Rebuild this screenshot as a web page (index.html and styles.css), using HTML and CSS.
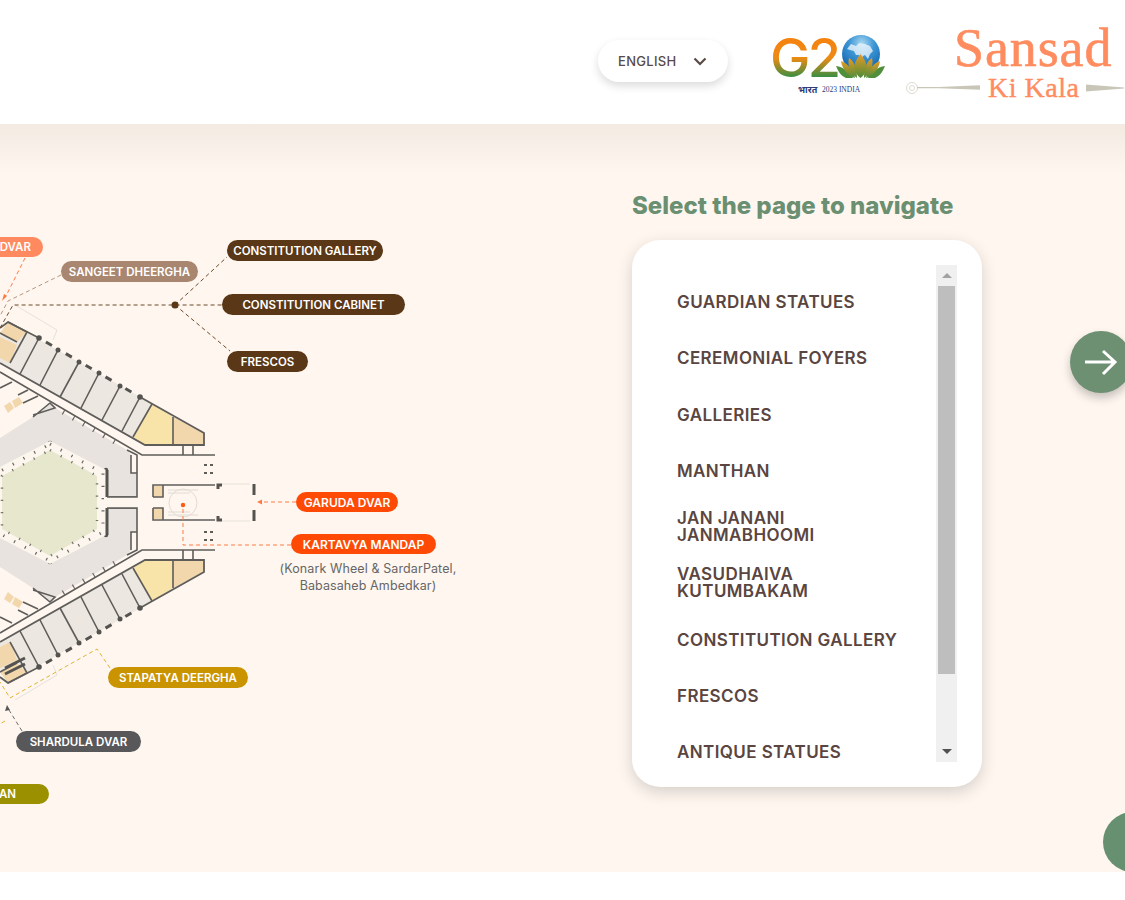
FILE: index.html
```html
<!DOCTYPE html>
<html lang="en">
<head>
<meta charset="utf-8">
<title>Sansad Ki Kala</title>
<link rel="stylesheet" href="styles.css">
</head>
<body>
<header class="topbar">
  <div class="lang">
    <span class="lang-label">ENGLISH</span>
    <svg class="lang-chevron" width="14" height="9" viewBox="0 0 14 9"><path d="M1.5 1.5 7 7l5.5-5.5" fill="none" stroke="#5a4a45" stroke-width="2.2"/></svg>
  </div>
  <svg class="g20" width="120" height="72" viewBox="766 28 120 72">
    <defs>
      <linearGradient id="tri" gradientUnits="userSpaceOnUse" x1="0" y1="38" x2="0" y2="78"><stop offset="0" stop-color="#f5820f"/><stop offset=".5" stop-color="#ee8a14"/><stop offset="1" stop-color="#2f8f45"/></linearGradient>
      <radialGradient id="sea" cx=".52" cy=".22" r=".8"><stop offset="0" stop-color="#a9d8f2"/><stop offset=".4" stop-color="#3f97d6"/><stop offset="1" stop-color="#0b5fa8"/></radialGradient>
      <linearGradient id="lotus" x1="0" y1="0" x2="0" y2="1"><stop offset="0" stop-color="#e99a25"/><stop offset="1" stop-color="#4c8c3a"/></linearGradient>
    </defs>
    <text class="g20-mark" x="770" y="77" fill="url(#tri)">G2</text>
    <circle cx="861" cy="54" r="19" fill="url(#sea)"/>
    <path d="M847 49l4-5 5 2 3-3 6 1 5 2 3 5-3 3-2 5-3-4-2 1-1 4-3-5-3 0-2-4-4-1z" fill="#e9f4fb" opacity=".8"/>
    <path d="M836 66c7 1 13 5 17 12h-7c-5-2-8-7-10-12zM885 66c-7 1-13 5-17 12h7c5-2 8-7 10-12z" fill="#4f8f3c"/>
    <path d="M841 61c6 2 12 8 14 17-7-2-13-9-14-17zM880 61c-6 2-12 8-14 17 7-2 13-9 14-17z" fill="url(#lotus)"/>
    <path d="M849 58c5 3 8 10 8 20-6-4-10-12-8-20zM872 58c-5 3-8 10-8 20 6-4 10-12 8-20z" fill="url(#lotus)"/>
    <path d="M860.500 54c4 5 7 10 6 15-1 4-3 7-6 9-3-2-5-5-6-9-1-5 2-10 6-15z" fill="url(#lotus)"/>
    <text class="g20-hi" x="798" y="93" fill="#2a3a78">भारत</text>
    <text class="g20-year" x="822" y="92" fill="#2a3a78">2023 INDIA</text>
  </svg>
  <div class="brand">
    <div class="brand-title">Sansad</div>
    <div class="brand-sub">
      <svg class="orn-left" width="76" height="16" viewBox="0 0 76 16"><circle cx="7" cy="8" r="5.500" fill="none" stroke="#dedbd0"/><circle cx="7" cy="8" r="2.500" fill="none" stroke="#dedbd0"/><path d="M12 7h22l41-1.800v4.600L34 8.200H12z" fill="#c9c6b8"/></svg>
      <span class="brand-kala">Ki Kala</span>
      <svg class="orn-right" width="38" height="10" viewBox="0 0 38 10"><path d="M0 1.500l38 3v1L0 8.500z" fill="#c9c6b8"/></svg>
    </div>
  </div>
</header>

<main class="stage">
  <section class="plan">
    <svg class="plan-svg" width="632" height="748" viewBox="0 124 632 748">
      <defs>
        <g id="half">
          <path class="f-gray" d="M0 438 33 417 50 403 55 408 127 450 131 455V473H137V497H107V503H0z"/>
          <path class="f-room" d="M8 322 204 433V445H145L0 363V336z"/>
          <path class="f-yellow" d="M152 404 173 417V445H145L133 437z"/>
          <path class="f-orange" d="M173 417 204 433V445H173z"/>
          <path class="f-orange" d="M8 322 27 332 17 342 0 333zM0 337 17 345 10 363 0 358z"/>
          <path class="f-orange" d="M4 406 10 402 14 408 8 413zM12 401 19 397 23 403 15 408z"/>
          <path class="f-orange" d="M153 486H163V497H153z"/>
          <path class="wall" d="M0 328 8 322 39 338M140 397 204 433V445H145L0 363"/>
          <path class="wall thin" d="M0 372 142 455H215M183 445V455M193 445V455M173 417V445M8 322 27 332 10 363M17 342 0 333"/>
          <path class="wall thin" d="M39 338 20 374M58 350 40 385M79 362 60 397M99 373 81 408M120 386 102 420M140 397 122 431M152 404 133 437"/>
          <path class="wall thin" d="M0 388 12 382M18 395 28 390M23 403 38 396M33 417 50 403 55 408 33 415M127 450 137 455V497H107M131 455V473H137"/>
          <path class="wall thin" d="M153 497V485H215M163 485V497H153"/>
          <path class="posts" d="M39 338 140 397"/>
          <circle class="post" cx="39" cy="338" r="2.800"/><circle class="post" cx="58" cy="350" r="2.500"/><circle class="post" cx="79" cy="362" r="2.500"/><circle class="post" cx="99" cy="373" r="2.500"/><circle class="post" cx="120" cy="386" r="2.500"/><circle class="post" cx="140" cy="397" r="2.800"/>
          <path class="ticks" d="M63 412 120 445"/>
          <path class="wall heavy" d="M93 472 97 476V481M45 452 50 449 55 452M6 472 2 476V481M218 489V485H222M254 484V495"/>
          <circle class="post" cx="50" cy="443" r="2.200"/>
          <circle class="post" cx="106" cy="470" r="2.200"/>
          <path class="wall dash-s" d="M204 465H213M204 473H213"/>
          <path class="faint" d="M15 305 57 330 53 340M222 484H250"/>
          <path class="fainter" d="M168 490H198M168 493H190"/>
        </g>
      </defs>
      <use href="#half"/>
      <use href="#half" transform="translate(0 1005) scale(1 -1)"/>
      <path class="f-cream" d="M50 441 106 470V535L50 564-6 535V470z"/>
      <path class="f-green" d="M50 450 97 476V529L50 556 2 529V476z"/>
      <path class="hex-ticks" d="M50 444 103 473V532L50 561-3 532V473z"/>
      <path class="hex-ticks inner" d="M50 450 97 476V529L50 556 2 529V476z"/>
      <path class="f-cream" d="M104 497H137V508H104z"/>
      <path class="wall heavy" d="M107 470V497M107 508V535"/>
      <path class="wall thin" d="M107 497H137M107 508H137"/>
      <circle class="fainter" cx="183" cy="503" r="14"/>
      <path class="wall heavy" d="M5 668 25 658M5 674 25 664"/>

      <path class="lead brown" d="M0 328 13 305H222M175 305 227 257M175 305 230 351"/>
      <circle cx="175" cy="305" r="3.500" fill="#5a3716"/>
      <path class="lead tan" d="M61 275 8 301 0 316"/>
      <path class="lead salmon" d="M25 258 6 296"/>
      <path d="M2 301 7 296 4 294z" fill="#ff7a45"/>
      <path class="lead salmon" d="M296 502H262M291 545H183V505"/>
      <path d="M257 502 262 499.500V504.500z" fill="#ff7a45"/>
      <circle cx="183" cy="505" r="2.200" fill="#ff5a14"/>
      <path class="lead gold" d="M110 668 97 649 10 698 0 682M5 721 0 724"/>
      <path class="lead gray" d="M22 731 9 710"/>
      <path d="M7 705 5 711 10 710z" fill="#58585a"/>
    </svg>

    <div class="pill p-hamsa">DVAR</div>
    <div class="pill p-sangeet">SANGEET DHEERGHA</div>
    <div class="pill p-gallery">CONSTITUTION GALLERY</div>
    <div class="pill p-cabinet">CONSTITUTION CABINET</div>
    <div class="pill p-frescos">FRESCOS</div>
    <div class="pill p-garuda">GARUDA DVAR</div>
    <div class="pill p-kartavya">KARTAVYA MANDAP</div>
    <p class="plan-note">(Konark Wheel &amp; SardarPatel,<br>Babasaheb Ambedkar)</p>
    <div class="pill p-stapatya">STAPATYA DEERGHA</div>
    <div class="pill p-shardula">SHARDULA DVAR</div>
    <div class="pill p-an">AN</div>
  </section>

  <section class="nav">
    <h2 class="nav-title">Select the page to navigate</h2>
    <div class="card">
      <ul class="pages">
        <li>GUARDIAN STATUES</li>
        <li>CEREMONIAL FOYERS</li>
        <li>GALLERIES</li>
        <li>MANTHAN</li>
        <li>JAN JANANI<br>JANMABHOOMI</li>
        <li>VASUDHAIVA<br>KUTUMBAKAM</li>
        <li>CONSTITUTION GALLERY</li>
        <li>FRESCOS</li>
        <li>ANTIQUE STATUES</li>
      </ul>
      <div class="scrollbar">
        <div class="sb-btn"><span class="sb-up"></span></div>
        <div class="sb-thumb"></div>
        <div class="sb-rest"><span class="sb-down"></span></div>
      </div>
    </div>
  </section>

  <button class="next" type="button" aria-label="Next">
    <svg width="36" height="28" viewBox="0 0 36 28"><path d="M2 14H32M20 3 32 14 20 26" fill="none" stroke="#fff" stroke-width="3"/></svg>
  </button>
  <div class="fab"></div>
</main>
</body>
</html>
```

FILE: styles.css
```css
* { box-sizing: border-box; }
html, body { margin: 0; padding: 0; }
body {
  width: 1125px;
  height: 900px;
  overflow: hidden;
  background: #fff;
  font-family: Inter, "Noto Sans", "Liberation Sans", sans-serif;
}

/* header */
.topbar {
  height: 124px;
  display: flex;
  justify-content: flex-end;
  align-items: flex-start;
  background: #fff;
}
.lang {
  width: 130px;
  height: 42px;
  margin-top: 40px;
  padding: 0 20px;
  display: flex;
  align-items: center;
  justify-content: space-between;
  background: #fff;
  border-radius: 21px;
  box-shadow: 0 4px 9px rgba(0, 0, 0, .14);
}
.lang-label { font-size: 13px; font-weight: 500; letter-spacing: .3px; color: #5a4a45; }
.lang-chevron { margin-right: 1px; }
.g20 { margin: 28px 19px 0 38px; }
.g20-mark { font-family: Inter, sans-serif; font-size: 54px; font-weight: 500; letter-spacing: -2.500px; }
.g20-hi { font-family: "Noto Sans", sans-serif; font-size: 9px; font-weight: 700; }
.g20-year { font-family: "Liberation Serif", serif; font-size: 7.500px; }
.brand { width: 220px; flex: none; display: flex; flex-direction: column; padding-top: 19px; }
.brand-title {
  font-family: "Liberation Serif", serif;
  font-size: 54px;
  line-height: 58px;
  letter-spacing: .9px;
  color: #ff8c5f;
  -webkit-text-stroke: .6px #ff8c5f;
  padding-left: 49px;
}
.brand-sub { display: flex; align-items: center; height: 28px; margin-top: -3px; }
.orn-left { flex: none; margin-right: 7px; }
.orn-right { flex: none; margin-left: 7px; }
.brand-kala {
  font-family: "Liberation Serif", serif;
  font-size: 28px;
  line-height: 28px;
  letter-spacing: .5px;
  white-space: nowrap;
  color: #ff8c5f;
  -webkit-text-stroke: .4px #ff8c5f;
}

/* stage */
.stage {
  position: relative;
  height: 748px;
  display: flex;
  overflow: hidden;
  background: linear-gradient(#f3ebe2 0, #fef6ef 50px);
}
.plan { position: relative; width: 632px; height: 100%; flex: none; }
.plan-svg { position: absolute; left: 0; top: 0; }

.f-gray { fill: #e8e3de; }
.f-room { fill: #ece7e0; }
.f-yellow { fill: #f8e3a8; }
.f-orange { fill: #f3d7ac; }
.f-cream { fill: #fdf6ee; }
.f-green { fill: #e6e7cc; }
.wall { fill: none; stroke: #5f5d5a; stroke-width: 1.800; }
.wall.thin { stroke-width: 1.600; }
.wall.heavy { stroke-width: 3; stroke: #55534f; }
.wall.dash-s { stroke-width: 1.800; stroke-dasharray: 3 3; }
.posts { fill: none; stroke: #55534f; stroke-width: 3; stroke-dasharray: 0 8 7 8; }
.post { fill: #55534f; }
.ticks { fill: none; stroke: #6a6763; stroke-width: 5; stroke-dasharray: 1.200 10.500; }
.hex-ticks { fill: none; stroke: #6a6763; stroke-width: 3; stroke-dasharray: 1.200 11; }
.hex-ticks.inner { stroke-width: 2.500; stroke: #77746e; }
.faint { fill: none; stroke: #e6e2db; stroke-width: 1; }
.fainter { fill: none; stroke: #e0dcd4; stroke-width: 1; }
.lead { fill: none; stroke-width: 1; stroke-dasharray: 4 3; }
.lead.brown { stroke: #6d4a28; }
.lead.tan { stroke: #b49680; }
.lead.salmon { stroke: #ff7a45; }
.lead.gold { stroke: #e3b42f; }
.lead.gray { stroke: #6b6b6d; }

.pill {
  position: absolute;
  height: 21px;
  border-radius: 11px;
  color: #fff;
  font-size: 11.500px;
  font-weight: 600;
  line-height: 22px;
  text-align: center;
  white-space: nowrap;
}
.p-hamsa { left: -20px; top: 113px; width: 63px; height: 20px; line-height: 21px; padding-right: 12px; text-align: right; background: #ff8a5f; }
.p-sangeet { left: 61px; top: 137px; width: 137px; background: #a98670; }
.p-gallery { left: 227px; top: 116px; width: 156px; background: #5a3716; }
.p-cabinet { left: 222px; top: 170px; width: 183px; background: #5a3716; }
.p-frescos { left: 227px; top: 227px; width: 81px; background: #5a3716; }
.p-garuda { left: 296px; top: 368px; width: 102px; height: 20px; line-height: 21px; font-size: 12px; background: #ff4a05; }
.p-kartavya { left: 291px; top: 410px; width: 145px; height: 20px; line-height: 21px; font-size: 12px; background: #ff4a05; }
.p-stapatya { left: 108px; top: 543px; width: 140px; background: #c99400; }
.p-shardula { left: 16px; top: 607px; width: 125px; background: #58585a; }
.p-an { left: -30px; top: 660px; width: 79px; height: 20px; line-height: 21px; padding-right: 33px; text-align: right; background: #9b9000; }
.plan-note {
  position: absolute;
  left: 268px;
  top: 436px;
  width: 200px;
  margin: 0;
  font-size: 12.500px;
  line-height: 17px;
  letter-spacing: .1px;
  text-align: center;
  color: #666;
}

/* navigation panel */
.nav { flex: none; width: 350px; padding-top: 65px; }
.nav-title {
  margin: 0 0 17px;
  font-size: 24px;
  line-height: 34px;
  font-weight: 800;
  white-space: nowrap;
  color: #6b8f71;
}
.card {
  width: 350px;
  height: 547px;
  padding: 25px 25px 25px 45px;
  display: flex;
  justify-content: space-between;
  background: #fff;
  border-radius: 28px;
  box-shadow: 0 5px 16px rgba(0, 0, 0, .16);
}
.pages { list-style: none; margin: 0; padding: 9px 0 0; height: 497px; overflow: hidden; }
.pages li {
  height: 56.250px;
  display: block;
  padding-top: 20px;
  font-size: 17px;
  line-height: 17px;
  font-weight: 600;
  letter-spacing: .4px;
  color: #5a4540;
}
.pages li:nth-child(5), .pages li:nth-child(6) { padding-top: 11px; }
.scrollbar { width: 21px; height: 497px; display: flex; flex-direction: column; background: #f0f0f0; }
.sb-btn { height: 21px; display: flex; align-items: center; justify-content: center; }
.sb-thumb { height: 388px; margin: 0 2px; background: #bebebe; }
.sb-rest { flex: 1; display: flex; align-items: flex-end; justify-content: center; padding-bottom: 8px; }
.sb-up { width: 0; height: 0; border: 5px solid transparent; border-top: 0; border-bottom: 5px solid #a3a3a3; }
.sb-down { width: 0; height: 0; border: 5px solid transparent; border-bottom: 0; border-top: 5px solid #505050; }

.next {
  position: absolute;
  left: 1070px;
  top: 207px;
  width: 62px;
  height: 62px;
  padding: 0 0 0 13px;
  border: 0;
  border-radius: 50%;
  display: flex;
  align-items: center;
  background: #6d8f72;
  box-shadow: 0 5px 10px rgba(0, 0, 0, .22);
}
.fab {
  position: absolute;
  left: 1103px;
  top: 688px;
  width: 60px;
  height: 60px;
  border-radius: 50%;
  background: #66906f;
}
```
